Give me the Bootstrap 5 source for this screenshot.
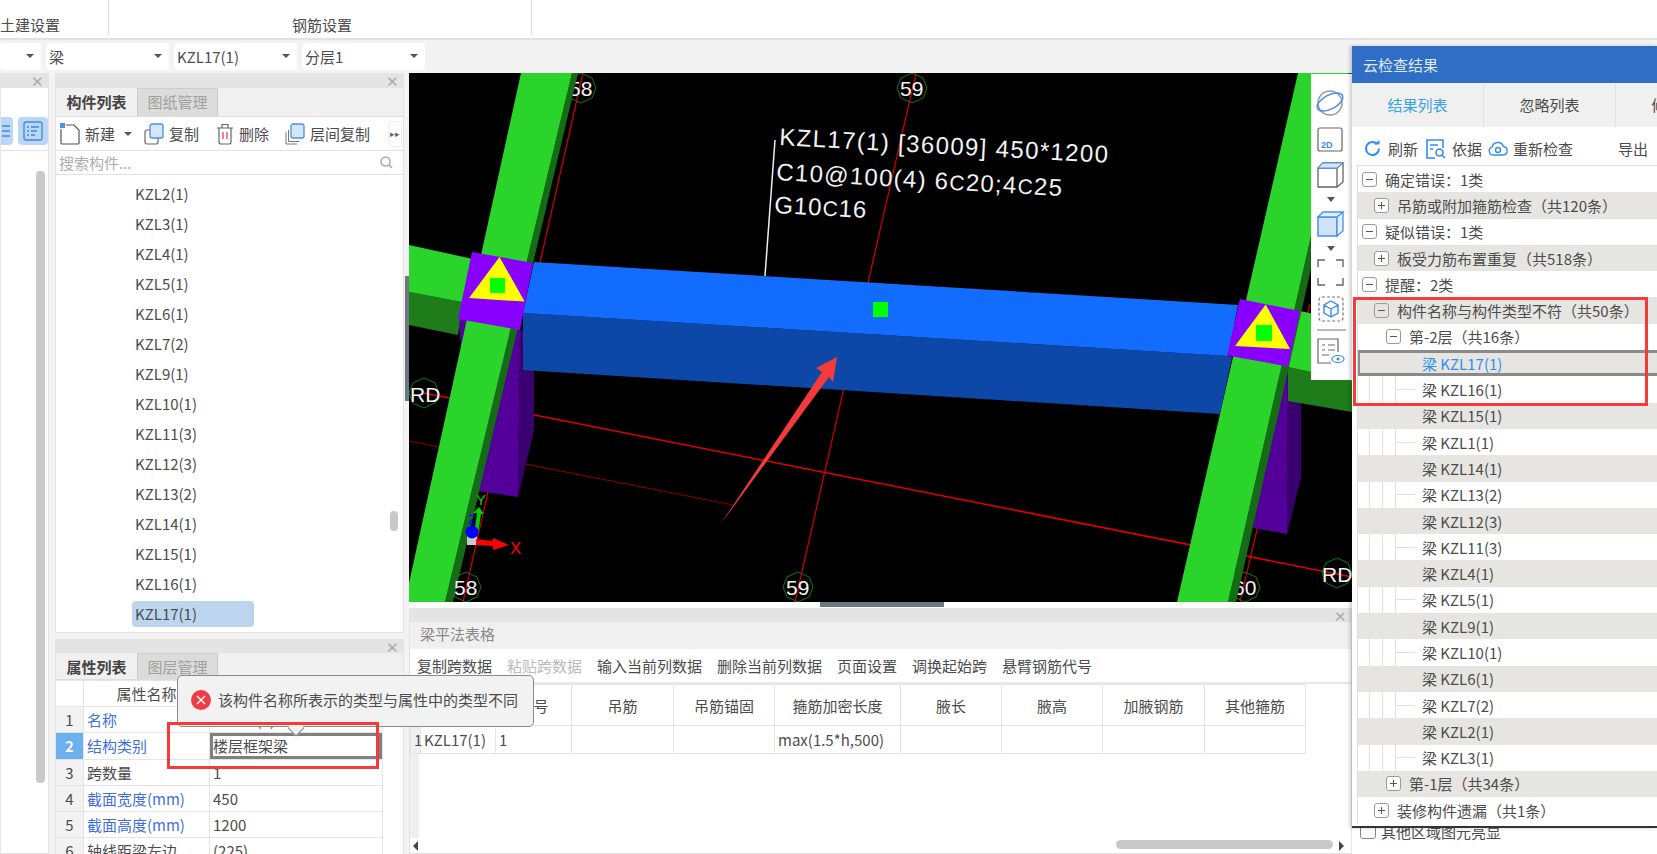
<!DOCTYPE html>
<html lang="zh-CN">
<head>
  <meta charset="UTF-8" />
  <title>云检查结果</title>
  <link href="https://cdn.jsdelivr.net/npm/bootstrap@5.3.2/dist/css/bootstrap.min.css" rel="stylesheet">
  <style>
    html, body { margin: 0; background: #f3f3f3; }
    .app { position: relative; width: 1657px; height: 854px; overflow: hidden; font: 15px/1 "Noto Sans CJK SC", sans-serif; color: #4c4c4c; }

    /* top bars */
    .ribbon { height: 40px; background: #fff; border-bottom: 2px solid #e2e2e2; }
    .ribbon-group { height: 35px; padding-top: 17px; border-right: 1px solid #ddd; text-align: center; }
    .ribbon-civil { width: 109px; text-align: left; }
    .ribbon-rebar { width: 423px; padding-left: 4px; }
    .pick-bar { height: 33px; padding-top: 3px; gap: 5px; }
    .pick { height: 27px; width: 123px; padding: 0 7px 1px 3px; background: #fff; border-radius: 4px; }
    .pick-first { width: 41px; }
    .down { width: 0; height: 0; border: 4px solid transparent; border-top: 4px solid #555; border-bottom: 0; }

    /* panels */
    .work { height: 781px; }
    .col-a { width: 49px; margin-right: 6px; }
    .col-b { width: 349px; margin-right: 5px; }
    .col-c { width: 943px; }
    .col-d { width: 305px; background: #fff; }
    .dock { background: #fff; border: 1px solid #e3e3e3; border-top: 0; }
    .dock-top { height: 15px; background: #e4e4e4; position: relative; flex: none; }
    .dock-x { position: absolute; right: 4px; top: 0; font-size: 15px; line-height: 15px; color: #aaa; }
    .tabs-bar { height: 29px; background: #f0f0f0; flex: none; border-bottom: 1px solid #ddd; }
    .tab-on { width: 81px; line-height: 27px; text-align: center; font-weight: 700; color: #444; }
    .tab-off { width: 81px; line-height: 26px; text-align: center; color: #a0a0a0; background: #dcdcdc; border: 1px solid #ccc; border-bottom: 0; }
    .tools { height: 34px; flex: none; border-bottom: 1px solid #e2e2e2; padding-left: 4px; white-space: nowrap; }
    .tool { gap: 5px; flex: none; }
    .tool svg { flex: none; }
    .tool-new { margin-right: 12px; }
    .tool-copy { margin-right: 17px; }
    .tool-del { margin-right: 16px; }
    .more { margin-left: 18px; flex: none; width: 14px; height: 26px; border: 1px solid #eee; border-radius: 4px; font-size: 9px; line-height: 24px; text-align: center; color: #666; }
    .finder { height: 24px; flex: none; padding: 0 10px 0 3px; border-bottom: 1px solid #e2e2e2; color: #aeaeae; }

    .side-tools { height: 34px; background: #fff; border-bottom: 1px solid #e2e2e2; margin-top: 29px; gap: 5px; }
    .side-btn { width: 12px; height: 28px; background: #bcd7f6; border-radius: 0 4px 4px 0; overflow: hidden; }
    .side-btn-b { width: 30px; border-radius: 4px; padding: 4px 5px; }
    .side-body { position: relative; }
    .side-thumb { position: absolute; left: 35px; top: 20px; width: 9px; height: 612px; background: #c9c9c9; border-radius: 4px; }

    .part-list { height: 457px; padding-top: 4px; position: relative; }
    .part { height: 30px; line-height: 30px; width: 122px; margin-left: 76px; padding-left: 3px; border-radius: 4px; }
    .part-on { background: #bdd4ee; height: 26px; line-height: 26px; margin-top: 2px; }
    .part-thumb { position: absolute; right: 5px; top: 336px; width: 8px; height: 20px; background: #c9c9c9; border-radius: 4px; }
    .prop-dock { margin-top: 6px; }
    .prop-dock .dock-top { height: 14px; }
    .prop-dock .tabs-bar { height: 27px; }

    .prop-table { width: 327px; table-layout: fixed; --bs-table-bg: transparent; --bs-table-color: #4c4c4c; --bs-border-color: #e4e4e4; margin: 0 0 0 -1px; }
    .prop-table.table > :not(caption) > * > * { padding: 0 3px; height: 26.2px; line-height: 1; vertical-align: middle; }
    .prop-table .num-cell { text-align: center; background: #f2f2f2; padding: 0; }
    .prop-table .num-on { background: #6cb0f0; color: #fff; font-weight: 700; }
    .prop-table .key-blue { color: #3f6fe0; }
    .prop-table .val-on { box-shadow: inset 0 0 0 3px #808080; }

    /* 3d view */
    .view { height: 529px; background: #000; position: relative; flex: none; }
    .view-svg { display: block; }
    .view-label { font-family: "Liberation Sans", sans-serif; fill: #f2f2f2; }
    .splitter-v { position: absolute; left: -4px; top: 203px; width: 4px; height: 125px; background: #6d7880; }
    .splitter-h { height: 6px; background: #fff; flex: none; }
    .splitter-grip { width: 124px; height: 5px; margin-left: 411px; background: #6d7880; }

    /* beam table */
    .grid-dock { position: relative; }
    .grid-dock .dock-top { height: 14px; }
    .grid-title { height: 27px; line-height: 24px; padding-left: 10px; background: #f0f0f0; color: #888; flex: none; }
    .grid-tools { height: 35px; flex: none; padding-left: 7px; gap: 15px; border-bottom: 2px solid #e8e8e8; }
    .grid-mute { color: #bbb; }
    .grid-area { position: relative; flex: 1; }
    .grid-strip { position: absolute; left: 0; top: 0; width: 9px; height: 154px; background: #f0f0f0; }
    .beam-table { position: relative; width: 895px; table-layout: fixed; --bs-table-bg: transparent; --bs-table-color: #4c4c4c; --bs-border-color: #e4e4e4; margin: 0; }
    .beam-table.table > :not(caption) > * > * { padding: 0 3px; line-height: 1; vertical-align: middle; }
    .beam-table th { height: 41px; font-weight: 400; text-align: center; }
    .beam-table td { height: 28px; }
    .beam-table .no-cell { padding: 0; text-align: center; background: #f0f0f0; }
    .grid-scroll { position: absolute; left: 0; right: 0; bottom: 0; height: 14px; }
    .scroll-l, .scroll-r { position: absolute; top: 2px; width: 0; height: 0; border: 5px solid transparent; }
    .scroll-l { left: 3px; border-right-color: #444; border-left: 0; }
    .scroll-r { left: 929px; border-left-color: #444; border-right: 0; }
    .scroll-thumb { position: absolute; left: 706px; top: 1px; width: 217px; height: 9px; background: #c9c9c9; border-radius: 5px; }

    /* floating toolbar and tooltip */
    .view-tools { position: absolute; left: 1311px; top: 74px; width: 41px; height: 306px; background: #fff; display: block; z-index: 2; }
    .hint { position: absolute; left: 177px; top: 675px; width: 357px; height: 52px; padding: 0 0 3px 13px; gap: 7px; background: #f2f2f2; border: 1px solid #8a8a8a; border-radius: 5px; z-index: 3; }
    .hint::after { content: ""; position: absolute; left: 112px; top: 46px; width: 12px; height: 12px; background: #f2f2f2; border-right: 1px solid #8a8a8a; border-bottom: 1px solid #8a8a8a; transform: rotate(45deg); }
    .mark-box { position: absolute; border: 3px solid #f43a3a; z-index: 5; }
    .mark-prop { left: 167px; top: 722px; width: 212px; height: 47px; }
    .mark-tree { left: 1353px; top: 297px; width: 295px; height: 109px; }

    /* cloud check panel */
    .cloud { position: absolute; left: 1352px; top: 46px; width: 305px; height: 782px; background: #fff; border-bottom: 2px solid #333; box-shadow: -2px 0 4px rgba(0,0,0,.22); z-index: 4; }
    .cloud-head { height: 37px; line-height: 37px; padding-left: 11px; background: #2f6ec4; color: #dfe9f7; }
    .cloud-tabs { height: 44px; background: #f0f0f0; }
    .cloud-tab { width: 132px; flex: none; line-height: 44px; text-align: center; border-right: 1px solid #e2e2e2; }
    .cloud-tab-on { color: #38a0ee; }
    .cloud-tools { height: 38px; padding: 5px 0 0 12px; }
    .ct { gap: 7px; }
    .ct-a { margin-right: 8px; }
    .ct-b { margin-right: 6px; gap: 6px; }
    .ct-c { margin-right: 45px; gap: 5px; }
    .tree { margin-left: 5px; border-top: 1px solid #ddd; border-left: 1px solid #ddd; }
    .tree-row { height: 26.3px; display: flex; align-items: center; white-space: nowrap; }
    .tree-alt { background-color: #e6e5e2; }
    .tree-l0 { padding-left: 4px; }
    .tree-l1 { padding-left: 16px; }
    .tree-l2 { padding-left: 28px; }
    .tree-leaf { padding-left: 64px; }
    .tree-guide { background-image: linear-gradient(#e0e0e0, #e0e0e0), linear-gradient(#e0e0e0, #e0e0e0), linear-gradient(#e0e0e0, #e0e0e0), linear-gradient(#e0e0e0, #e0e0e0); background-repeat: no-repeat; background-size: 1px 100%, 1px 100%, 1px 100%, 20px 1px; background-position: 11px 0, 24px 0, 37px 0, 37px 50%; }
    .tree-sel { background-color: #e6e5e2; box-shadow: inset 0 3px 0 #8a8a8a, inset 0 -3px 0 #8a8a8a, inset 2px 0 0 #8a8a8a; color: #2f8ff0; }
    .fold { width: 15px; height: 15px; flex: none; margin-right: 8px; border: 1px solid #9a9a9a; border-radius: 3px; background: #fff; position: relative; }
    .fold::before { content: ""; position: absolute; left: 3px; top: 6px; width: 7px; height: 1px; background: #555; }
    .fold-plus::after { content: ""; position: absolute; left: 6px; top: 3px; width: 1px; height: 7px; background: #555; }
    .fold-gray { background: #e6e5e2; }
    .under { margin-top: auto; margin-bottom: 10px; height: 26px; padding: 0 0 0 8px; }
    .under-check { width: 16px; height: 16px; margin-right: 5px; border: 1px solid #888; border-radius: 3px; }
  </style>
</head>
<body>
<div class="app">

  <!-- Ribbon -->
  <div class="ribbon d-flex">
    <div class="ribbon-group ribbon-civil">土建设置</div>
    <div class="ribbon-group ribbon-rebar">钢筋设置</div>
  </div>

  <!-- Selectors -->
  <div class="pick-bar d-flex">
    <div class="pick pick-first d-flex align-items-center justify-content-end"><span class="down"></span></div>
    <div class="pick d-flex align-items-center justify-content-between">梁<span class="down"></span></div>
    <div class="pick d-flex align-items-center justify-content-between">KZL17(1)<span class="down"></span></div>
    <div class="pick d-flex align-items-center justify-content-between">分层1<span class="down"></span></div>
  </div>

  <div class="work d-flex">

    <!-- Narrow left dock -->
    <div class="col-a dock d-flex flex-column">
      <div class="dock-top"><span class="dock-x">✕</span></div>
      <div class="side-tools d-flex">
        <div class="side-btn">
          <svg width="12" height="28" viewBox="0 0 12 28"><path d="M1 9h8M1 14h8M1 19h8" stroke="#3d8be8" stroke-width="1.5"/></svg>
        </div>
        <div class="side-btn side-btn-b">
          <svg width="20" height="20" viewBox="0 0 20 20" fill="none" stroke="#3d8be8" stroke-width="1.4"><rect x="1" y="1" width="18" height="18" rx="2"/><path d="M4 6h2M8 6h8M4 10h2M8 10h6M4 14h2M8 14h4"/></svg>
        </div>
      </div>
      <div class="side-body flex-grow-1"><div class="side-thumb"></div></div>
    </div>

    <!-- Component list and property list -->
    <div class="col-b d-flex flex-column">
      <div class="dock d-flex flex-column">
        <div class="dock-top"><span class="dock-x">✕</span></div>
        <div class="tabs-bar d-flex"><div class="tab-on">构件列表</div><div class="tab-off">图纸管理</div></div>
        <div class="tools d-flex align-items-center">
          <div class="tool tool-new d-flex align-items-center">
            <svg width="20" height="22" viewBox="0 0 20 22" fill="none"><path d="M1 6v14a1 1 0 0 0 1 1h16a1 1 0 0 0 1-1V7l-5-5H6" stroke="#555" stroke-width="1.2"/><rect x="0" y="0" width="5" height="5" fill="#4a90e8"/></svg>
            <span>新建</span><span class="down ms-1"></span>
          </div>
          <div class="tool tool-copy d-flex align-items-center">
            <svg width="20" height="22" viewBox="0 0 20 22" fill="none"><rect x="1" y="7" width="13" height="14" rx="2" stroke="#666" stroke-width="1.2"/><rect x="6" y="1" width="13" height="14" rx="2" fill="#d5e6fb" stroke="#4a90e8" stroke-width="1.3"/></svg>
            <span>复制</span>
          </div>
          <div class="tool tool-del d-flex align-items-center">
            <svg width="18" height="22" viewBox="0 0 18 22" fill="none" stroke="#666" stroke-width="1.2"><path d="M1 5h16M6 5V1.500h6V5M3 5v14a2 2 0 0 0 2 2h8a2 2 0 0 0 2-2V5"/><path d="M7 9v7M11 9v7" stroke="#e33"/></svg>
            <span>删除</span>
          </div>
          <div class="tool d-flex align-items-center">
            <svg width="20" height="22" viewBox="0 0 20 22" fill="none"><path d="M1 9v12h11M3.500 7v11.500h11" stroke="#777" stroke-width="1"/><rect x="6" y="1" width="13" height="14" rx="2" fill="#d5e6fb" stroke="#4a90e8" stroke-width="1.3"/></svg>
            <span>层间复制</span>
          </div>
          <div class="more">▸▸</div>
        </div>
        <div class="finder d-flex align-items-center justify-content-between">
          <span>搜索构件...</span>
          <svg width="13" height="13" viewBox="0 0 13 13" fill="none" stroke="#aaa" stroke-width="1.5"><circle cx="5.500" cy="5.500" r="4.500"/><path d="M9 9l3 3"/></svg>
        </div>
        <div class="part-list">
          <div class="part">KZL2(1)</div>
          <div class="part">KZL3(1)</div>
          <div class="part">KZL4(1)</div>
          <div class="part">KZL5(1)</div>
          <div class="part">KZL6(1)</div>
          <div class="part">KZL7(2)</div>
          <div class="part">KZL9(1)</div>
          <div class="part">KZL10(1)</div>
          <div class="part">KZL11(3)</div>
          <div class="part">KZL12(3)</div>
          <div class="part">KZL13(2)</div>
          <div class="part">KZL14(1)</div>
          <div class="part">KZL15(1)</div>
          <div class="part">KZL16(1)</div>
          <div class="part part-on">KZL17(1)</div>
          <div class="part-thumb"></div>
        </div>
      </div>

      <div class="dock flex-grow-1 d-flex flex-column prop-dock">
        <div class="dock-top"><span class="dock-x">✕</span></div>
        <div class="tabs-bar d-flex"><div class="tab-on">属性列表</div><div class="tab-off">图层管理</div></div>
        <table class="table table-bordered prop-table">
          <colgroup><col style="width:28px"><col style="width:126px"><col style="width:173px"></colgroup>
          <tbody>
            <tr><td class="num-cell bg-white"></td><td class="text-center">属性名称</td><td class="text-center">属性值</td></tr>
            <tr><td class="num-cell">1</td><td class="key-blue">名称</td><td>KZL17(1)</td></tr>
            <tr><td class="num-cell num-on">2</td><td class="key-blue">结构类别</td><td class="val-on">楼层框架梁</td></tr>
            <tr><td class="num-cell">3</td><td>跨数量</td><td>1</td></tr>
            <tr><td class="num-cell">4</td><td class="key-blue">截面宽度(mm)</td><td>450</td></tr>
            <tr><td class="num-cell">5</td><td class="key-blue">截面高度(mm)</td><td>1200</td></tr>
            <tr><td class="num-cell">6</td><td>轴线距梁左边</td><td>(225)</td></tr>
          </tbody>
        </table>
      </div>
    </div>

    <!-- 3D view and beam table -->
    <div class="col-c d-flex flex-column">
      <div class="view">
        <div class="splitter-v"></div>
        <svg class="view-svg" width="943" height="529" viewBox="409 73 943 529">
          <defs>
            <polygon id="axis-ring" points="0,-15 11,-10 15,0 11,10 0,15 -11,10 -15,0 -11,-10" fill="none" stroke="#0e7a0e" stroke-width="1"/>
          </defs>
          <!-- axis lines -->
          <path d="M583 73L463 602M916 73L795 602M1310 304L1240 602" stroke="#d00000" stroke-width="1.2"/>
          <path d="M424 393L1352 577" stroke="#e00000" stroke-width="1.500"/>
          <path d="M409 441L733 505" stroke="#7d0000" stroke-width="1.2"/>
          <path d="M775 140L765 276" stroke="#eee" stroke-width="1.500"/>

          <!-- axis tags behind the columns -->
          <use href="#axis-ring" x="581" y="88"/>
          <text class="view-label" x="569" y="96" font-size="21">58</text>
          <use href="#axis-ring" x="912" y="88"/>
          <text class="view-label" x="900" y="96" font-size="21">59</text>
          <use href="#axis-ring" x="1245" y="587"/>
          <text class="view-label" x="1233" y="595" font-size="21">60</text>

          <!-- purple columns -->
          <path d="M458 319L520 330L518 497L478 491Z" fill="#520099"/>
          <path d="M520 330L534 330L534 430L518 497Z" fill="#3a0070"/>
          <path d="M1281 366L1288 366L1287 534L1253 528Z" fill="#520099"/>
          <path d="M1288 366L1301 400L1301 477L1287 534Z" fill="#3a0070"/>

          <!-- side stubs -->
          <path d="M409 292L462 302L458 335L409 325Z" fill="#1e7d1a"/>
          <path d="M409 245L473 259L462 302L409 292Z" fill="#2bd42b"/>
          <path d="M1288 367L1352 381L1352 412L1288 401Z" fill="#1e7d1a"/>
          <path d="M1300 311L1352 322L1352 381L1288 367Z" fill="#2bd42b"/>

          <!-- main green beams -->
          <path d="M572 73L578 73L453 602L445 602Z" fill="#146c14"/>
          <path d="M521 73L572 73L445 602L409 602L409 583Z" fill="#2bd42b"/>
          <path d="M1348 73L1355 73L1236 602L1228 602Z" fill="#146c14"/>
          <path d="M1298 73L1348 73L1228 602L1177 602Z" fill="#2bd42b"/>

          <!-- blue beam -->
          <path d="M523 313L1228 356L1232 357L1220 414L523 370Z" fill="#0d47a8"/>
          <path d="M534 262L1238 305L1228 356L523 313Z" fill="#126dff"/>
          <rect x="873" y="302" width="15" height="15" fill="#00ff00"/>

          <!-- nodes -->
          <path d="M472 252L533 263L520 330L458 319Z" fill="#8a00ff"/>
          <path d="M499.500 257L469 298L524.600 301.600Z" fill="#ffff00"/>
          <rect x="490" y="278" width="15" height="15" fill="#00ff00"/>
          <path d="M1240 299L1300 311L1288 366.500L1227 355.500Z" fill="#8a00ff"/>
          <path d="M1265.700 304.500L1235 346L1290 349Z" fill="#ffff00"/>
          <rect x="1256" y="325" width="16" height="16" fill="#00ff00"/>

          <!-- beam label -->
          <g class="view-label" font-size="24">
            <text transform="translate(779 145) rotate(3.100)" textLength="329">KZL17(1) [36009] 450*1200</text>
            <text transform="translate(776 180) rotate(3.200)" textLength="286">C10@100(4) 6<tspan font-size="21">C</tspan>20;4<tspan font-size="21">C</tspan>25</text>
            <text transform="translate(774 213) rotate(3.100)" textLength="92">G10<tspan font-size="21">C</tspan>16</text>
          </g>

          <!-- axis tags in front -->
          <use href="#axis-ring" x="424" y="393"/>
          <text class="view-label" x="410" y="402" font-size="21">RD</text>
          <use href="#axis-ring" x="1337" y="573"/>
          <text class="view-label" x="1322" y="582" font-size="21">RD</text>
          <use href="#axis-ring" x="466" y="587"/>
          <text class="view-label" x="454" y="595" font-size="21">58</text>
          <use href="#axis-ring" x="798" y="587"/>
          <text class="view-label" x="786" y="595" font-size="21">59</text>

          <!-- gizmo -->
          <rect x="467" y="535" width="10" height="10" fill="#c9c9c9"/>
          <path d="M474 534L477 513L473 513L479 507L484 514L481 514L478 535Z" fill="#00d000"/>
          <path d="M476 539L493 541L493 538L509 545L493 550L493 546L476 545Z" fill="#ff0000"/>
          <circle cx="472" cy="532" r="6.500" fill="#0000ff"/>
          <text x="468" y="524" font-family="Liberation Sans, sans-serif" font-size="13" fill="#0000ff">Z</text>
          <text x="476" y="505" font-family="Liberation Sans, sans-serif" font-size="15" fill="#00d000">Y</text>
          <text x="510" y="554" font-family="Liberation Sans, sans-serif" font-size="17" fill="#ff0000">X</text>

          <!-- annotation arrow -->
          <path d="M837 357L816 368L822 372L720 525L829 377L833 382Z" fill="#f43a3a"/>
        </svg>
      </div>
      <div class="splitter-h"><div class="splitter-grip"></div></div>

      <div class="dock grid-dock flex-grow-1 d-flex flex-column">
        <div class="dock-top"><span class="dock-x">✕</span></div>
        <div class="grid-title">梁平法表格</div>
        <div class="grid-tools d-flex align-items-center">
          <span>复制跨数据</span><span class="grid-mute">粘贴跨数据</span><span>输入当前列数据</span><span>删除当前列数据</span><span>页面设置</span><span>调换起始跨</span><span>悬臂钢筋代号</span>
        </div>
        <div class="grid-area">
          <div class="grid-strip"></div>
          <table class="table table-bordered beam-table">
            <colgroup>
              <col style="width:10px"><col style="width:75px"><col style="width:76px"><col style="width:102px"><col style="width:101px"><col style="width:126px"><col style="width:101px"><col style="width:101px"><col style="width:102px"><col style="width:101px">
            </colgroup>
            <thead>
              <tr><th class="no-cell"></th><th>名称</th><th>跨号</th><th>吊筋</th><th>吊筋锚固</th><th>箍筋加密长度</th><th>腋长</th><th>腋高</th><th>加腋钢筋</th><th>其他箍筋</th></tr>
            </thead>
            <tbody>
              <tr><td class="no-cell">1</td><td>KZL17(1)</td><td>1</td><td></td><td></td><td>max(1.5*h,500)</td><td></td><td></td><td></td><td></td></tr>
            </tbody>
          </table>
          <div class="grid-scroll"><span class="scroll-l"></span><span class="scroll-thumb"></span><span class="scroll-r"></span></div>
        </div>
      </div>
    </div>

    <!-- Under the floating panel -->
    <div class="col-d d-flex flex-column">
      <div class="under d-flex align-items-center"><span class="under-check"></span>其他区域图元亮显</div>
    </div>
  </div>

  <!-- Floating view toolbar -->
  <svg class="view-tools" viewBox="1311 74 41 306" fill="none">
    <circle cx="1330" cy="103" r="12" stroke="#999" stroke-width="1.500"/>
    <ellipse cx="1330" cy="102" rx="14" ry="7" transform="rotate(-28 1330 102)" stroke="#4a90e8" stroke-width="1.500"/>
    <rect x="1318" y="128" width="24" height="23" rx="2" stroke="#666" stroke-width="1.200"/>
    <text x="1321" y="148" font-family="Liberation Sans, sans-serif" font-size="9" font-weight="700" fill="#3d8be8">2D</text>
    <path d="M1318 168h19v19h-19zM1318 168l5-5h20l-6 5M1343 163v19l-6 5" stroke="#666" stroke-width="1.300"/>
    <path d="M1318 168l5-5h20l-6 5z" fill="#d5e6fb" stroke="#4a90e8"/>
    <path d="M1327 197h8l-4 5z" fill="#555"/>
    <path d="M1318 217h19v19h-19z" fill="#cfe2fb" stroke="#4a90e8" stroke-width="1.500"/>
    <path d="M1318 217l5-5h20l-6 5zM1343 212v19l-6 5v-19z" fill="#e2eefc" stroke="#4a90e8" stroke-width="1.300"/>
    <path d="M1327 246h8l-4 5z" fill="#555"/>
    <path d="M1318 267v-7h7M1336 260h7v7M1343 278v7h-7M1325 285h-7v-7" stroke="#666" stroke-width="1.400"/>
    <rect x="1319" y="297" width="24" height="24" rx="3" stroke="#777" stroke-width="1.200" stroke-dasharray="3 2"/>
    <path d="M1331 301l7 4v8l-7 4-7-4v-8zM1324 305l7 4 7-4M1331 309v8" stroke="#3d8be8" stroke-width="1.400"/>
    <path d="M1317 330h29" stroke="#777"/>
    <path d="M1338 352v-13h-20v24h13" stroke="#666" stroke-width="1.200"/>
    <path d="M1322 345h3M1328 345h7M1322 350h3M1328 350h7M1322 355h7" stroke="#666"/>
    <ellipse cx="1338" cy="359" rx="6" ry="3.500" stroke="#3d8be8" stroke-width="1.200"/>
    <circle cx="1338" cy="359" r="1.500" fill="#3d8be8"/>
  </svg>

  <!-- Error tooltip -->
  <div class="hint d-flex align-items-center">
    <svg width="20" height="20" viewBox="0 0 20 20"><circle cx="10" cy="10" r="10" fill="#ee3d46"/><path d="M6 6l8 8M14 6l-8 8" stroke="#fff" stroke-width="1.400"/></svg>
    <span>该构件名称所表示的类型与属性中的类型不同</span>
  </div>

  <!-- Cloud check result panel -->
  <div class="cloud">
    <div class="cloud-head">云检查结果</div>
    <div class="cloud-tabs d-flex overflow-hidden">
      <div class="cloud-tab cloud-tab-on">结果列表</div>
      <div class="cloud-tab">忽略列表</div>
      <div class="cloud-tab">修复列表</div>
    </div>
    <div class="cloud-tools d-flex align-items-center">
      <div class="ct ct-a d-flex align-items-center">
        <svg width="17" height="17" viewBox="0 0 17 17" fill="none"><path d="M15 8.500a6.500 6.500 0 1 1-2-4.700" stroke="#2f8ff0" stroke-width="2"/><path d="M10 4.500h5.500V0z" fill="#2f8ff0"/></svg>
        <span>刷新</span>
      </div>
      <div class="ct ct-b d-flex align-items-center">
        <svg width="20" height="20" viewBox="0 0 20 20" fill="none" stroke="#2f8ff0" stroke-width="1.600"><path d="M9 19H1V1h16v8"/><path d="M4 6h8M4 10h3"/><circle cx="13.500" cy="13.500" r="3.500"/><path d="M16 16l3 3"/></svg>
        <span>依据</span>
      </div>
      <div class="ct ct-c d-flex align-items-center">
        <svg width="20" height="15" viewBox="0 0 20 15" fill="none" stroke="#2f8ff0" stroke-width="1.400"><path d="M5 14a4 4 0 0 1-1-7.800 6 6 0 0 1 11.500-.7A4.300 4.300 0 0 1 15.500 14z"/><circle cx="10" cy="9" r="2.500"/></svg>
        <span>重新检查</span>
      </div>
      <span>导出</span>
    </div>

    <div class="tree">
      <div class="tree-row tree-l0"><span class="fold"></span>确定错误：1类</div>
      <div class="tree-row tree-alt tree-l1"><span class="fold fold-plus"></span>吊筋或附加箍筋检查（共120条）</div>
      <div class="tree-row tree-l0"><span class="fold"></span>疑似错误：1类</div>
      <div class="tree-row tree-alt tree-l1"><span class="fold fold-plus"></span>板受力筋布置重复（共518条）</div>
      <div class="tree-row tree-l0"><span class="fold"></span>提醒：2类</div>
      <div class="tree-row tree-alt tree-l1"><span class="fold fold-gray"></span>构件名称与构件类型不符（共50条）</div>
      <div class="tree-row tree-l2"><span class="fold"></span>第-2层（共16条）</div>
      <div class="tree-row tree-leaf tree-sel">梁 KZL17(1)</div>
      <div class="tree-row tree-leaf tree-guide">梁 KZL16(1)</div>
      <div class="tree-row tree-leaf tree-alt">梁 KZL15(1)</div>
      <div class="tree-row tree-leaf tree-guide">梁 KZL1(1)</div>
      <div class="tree-row tree-leaf tree-alt">梁 KZL14(1)</div>
      <div class="tree-row tree-leaf tree-guide">梁 KZL13(2)</div>
      <div class="tree-row tree-leaf tree-alt">梁 KZL12(3)</div>
      <div class="tree-row tree-leaf tree-guide">梁 KZL11(3)</div>
      <div class="tree-row tree-leaf tree-alt">梁 KZL4(1)</div>
      <div class="tree-row tree-leaf tree-guide">梁 KZL5(1)</div>
      <div class="tree-row tree-leaf tree-alt">梁 KZL9(1)</div>
      <div class="tree-row tree-leaf tree-guide">梁 KZL10(1)</div>
      <div class="tree-row tree-leaf tree-alt">梁 KZL6(1)</div>
      <div class="tree-row tree-leaf tree-guide">梁 KZL7(2)</div>
      <div class="tree-row tree-leaf tree-alt">梁 KZL2(1)</div>
      <div class="tree-row tree-leaf tree-guide">梁 KZL3(1)</div>
      <div class="tree-row tree-alt tree-l2"><span class="fold fold-plus"></span>第-1层（共34条）</div>
      <div class="tree-row tree-l1"><span class="fold fold-plus"></span>装修构件遗漏（共1条）</div>
    </div>
  </div>

  <!-- Red review marks -->
  <div class="mark-box mark-prop"></div>
  <div class="mark-box mark-tree"></div>
</div>
<script src="https://cdn.jsdelivr.net/npm/bootstrap@5.3.2/dist/js/bootstrap.bundle.min.js"></script>
</body>
</html>
